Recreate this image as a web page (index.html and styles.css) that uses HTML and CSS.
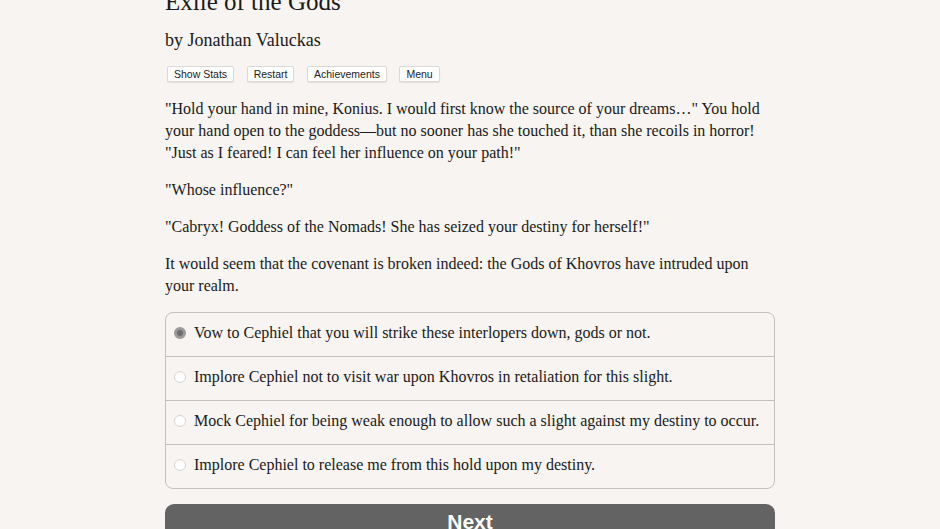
FILE: index.html
```html
<!DOCTYPE html>
<html>
<head>
<meta charset="utf-8">
<link rel="stylesheet" href="styles.css">
</head>
<body>
<div class="page">
  <h1 class="title">Exile of the Gods</h1>
  <h2 class="author">by Jonathan Valuckas</h2>
  <div class="buttons">
    <button class="btn">Show Stats</button>
    <button class="btn">Restart</button>
    <button class="btn">Achievements</button>
    <button class="btn">Menu</button>
  </div>
  <div class="text">
    <p>"Hold your hand in mine, Konius. I would first know the source of your dreams…" You hold your hand open to the goddess—but no sooner has she touched it, than she recoils in horror! "Just as I feared! I can feel her influence on your path!"</p>
    <p>"Whose influence?"</p>
    <p>"Cabryx! Goddess of the Nomads! She has seized your destiny for herself!"</p>
    <p>It would seem that the covenant is broken indeed: the Gods of Khovros have intruded upon your realm.</p>
  </div>
  <div class="choices">
    <label class="choice"><span class="radio checked"></span><span>Vow to Cephiel that you will strike these interlopers down, gods or not.</span></label>
    <label class="choice"><span class="radio"></span><span>Implore Cephiel not to visit war upon Khovros in retaliation for this slight.</span></label>
    <label class="choice"><span class="radio"></span><span>Mock Cephiel for being weak enough to allow such a slight against my destiny to occur.</span></label>
    <label class="choice"><span class="radio"></span><span>Implore Cephiel to release me from this hold upon my destiny.</span></label>
  </div>
  <div class="next">Next</div>
</div>
</body>
</html>
```
FILE: styles.css
```css
html, body {
  margin: 0;
  padding: 0;
  background: #f7f4f1;
  overflow: hidden;
}
body {
  font-family: "Liberation Serif", "Times New Roman", serif;
  color: #1a1a1a;
}
.page {
  width: 610px;
  margin: -14px auto 0;
}
.title {
  font-size: 25px;
  font-weight: normal;
  margin: 0;
  line-height: 32px;
}
.author {
  font-size: 18px;
  font-weight: normal;
  margin: 10px 0 0;
  line-height: 24px;
}
.buttons {
  display: flex;
  gap: 12.5px;
  margin: 14px 0 0 2px;
}
.btn {
  font-family: "Liberation Sans", Arial, sans-serif;
  font-size: 10.5px;
  color: #222;
  background: #fff;
  border: 1px solid #dcd8d4;
  border-radius: 2px;
  box-shadow: 0 1px 1px rgba(0,0,0,0.08);
  padding: 0 6px;
  height: 16px;
  line-height: 14px;
}
.text {
  margin-top: 16px;
  font-size: 16px;
  line-height: 22px;
}
.text p {
  margin: 0 0 15px;
}
.choices {
  margin-top: 15px;
  border: 1px solid #c4c0bc;
  border-radius: 8px;
  display: flex;
  flex-direction: column;
}
.choice {
  display: flex;
  align-items: center;
  height: 43px;
  box-sizing: border-box;
  font-size: 16px;
  padding: 0 0 3px 8px;
  border-top: 1px solid #c4c0bc;
}
.choice:first-child {
  border-top: none;
  height: 43px;
}
.choice + .choice {
  height: 44px;
}
.radio {
  width: 12px;
  height: 12px;
  border-radius: 50%;
  background: #fff;
  border: 1px solid #d8d4d0;
  margin-right: 8px;
  flex: none;
  box-sizing: border-box;
}
.radio.checked {
  background: #6e6e6e;
  border: 3.5px solid #9a9a9a;
}
.next {
  margin-top: 15px;
  height: 44px;
  background: #636363;
  border-radius: 9px;
  color: #fff;
  font-family: "Liberation Sans", Arial, sans-serif;
  font-weight: bold;
  font-size: 21px;
  text-align: center;
  line-height: 36px;
}
```
